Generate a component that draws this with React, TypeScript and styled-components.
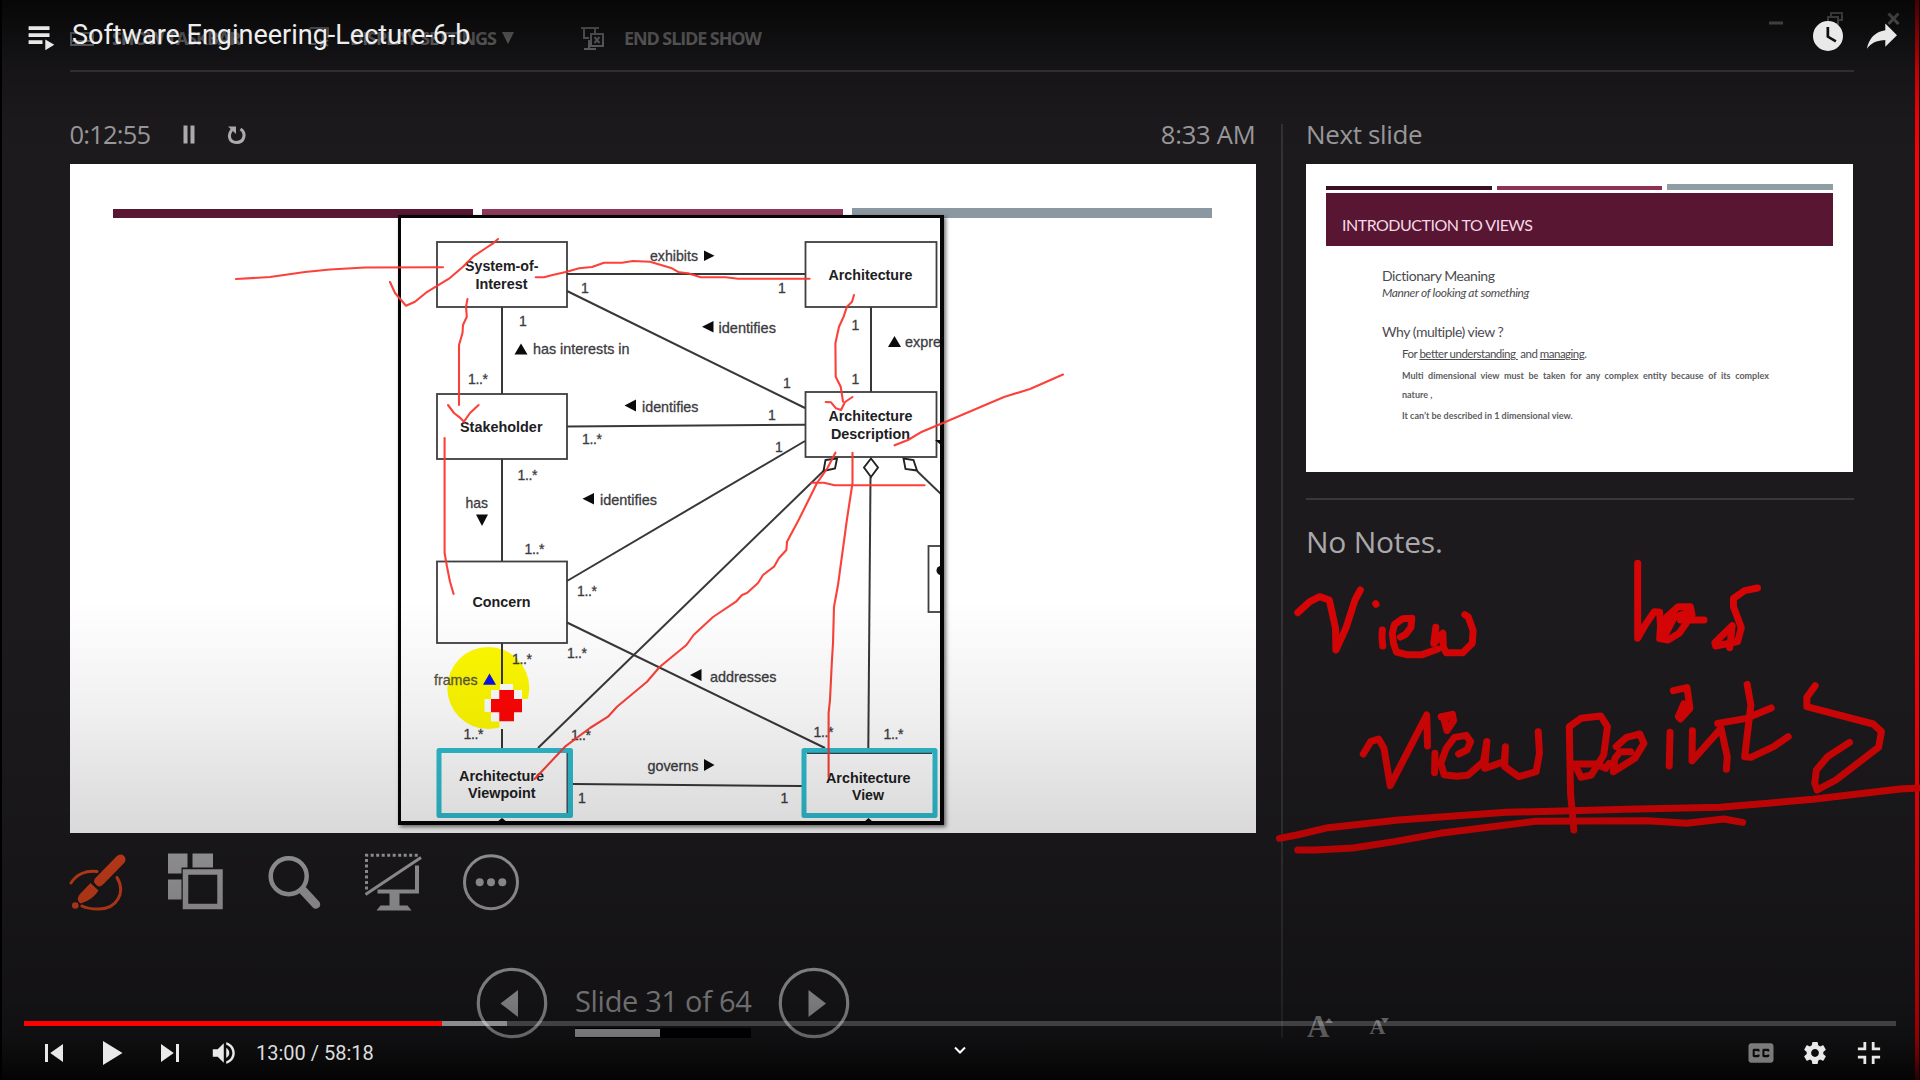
import React from 'react';
import styled, { createGlobalStyle } from 'styled-components';

const GlobalStyle = createGlobalStyle`
  *, *::before, *::after { box-sizing: border-box; }
  html, body { margin: 0; padding: 0; background: #000; }
  body { overflow: hidden; }
`;

const ui = '"Open Sans", "Noto Sans", sans-serif';
const muted = '#9c9b9d';

const Stage = styled.main`
  position: relative;
  display: flex;
  width: 1920px;
  height: 1080px;
  overflow: hidden;
  background: #000;
  padding-left: 2px;
  font-family: ${ui};
`;

const Presenter = styled.section`
  display: flex;
  flex-direction: column;
  width: 1913px;
  height: 1080px;
  padding: 0 61px 0 68px;
  background: #1c1a1d;
`;

const RedEdge = styled.div`
  width: 4px;
  height: 1080px;
  background: #fb0007;
`;

/* ---------- presenter header ---------- */

const Header = styled.header`
  display: flex;
  align-items: center;
  flex: none;
  height: 72px;
  padding-top: 6px;
  border-bottom: 2px solid #3d3c3e;
`;

const HeaderItem = styled.div<{ $width: number; $spacing?: number }>`
  display: flex;
  align-items: center;
  gap: 18px;
  width: ${(p) => p.$width}px;
  color: #8f8e90;
  font-size: 18px;
  font-weight: 700;
  line-height: 24px;
  white-space: nowrap;
  letter-spacing: ${(p) => p.$spacing ?? 0}px;
`;

const Caret = styled.span`
  width: 0;
  height: 0;
  margin-left: -12px;
  border: 6px solid transparent;
  border-top: 12px solid #8f8e90;
  border-bottom: 0;
`;

const WindowControls = styled.div`
  display: flex;
  align-self: flex-start;
  gap: 44px;
  margin: 5px -46px 0 auto;
`;

/* ---------- presenter body ---------- */

const Body = styled.div`
  display: flex;
  flex: 1;
`;

const MainColumn = styled.div`
  display: flex;
  flex-direction: column;
  width: 1186px;
  margin-left: -0.5px;
`;

const TimerRow = styled.div`
  display: flex;
  align-items: center;
  height: 92px;
  padding-top: 32px;
  color: ${muted};
  font-size: 25.5px;
`;

const Elapsed = styled.span`
  width: 112px;
  letter-spacing: -0.8px;
`;

const Clock = styled.span`
  margin-left: auto;
  letter-spacing: -0.2px;
`;

const Slide = styled.div`
  display: flex;
  flex-direction: column;
  height: 668.5px;
  padding: 44px 43px 0;
  background: #fff;
`;

const AccentBars = styled.div<{ $gap: number; $height: number }>`
  display: flex;
  align-items: flex-end;
  gap: ${(p) => p.$gap}px;
  height: ${(p) => p.$height}px;
`;

const AccentBar = styled.div<{ $color: string; $height: number }>`
  flex: 1;
  height: ${(p) => p.$height}px;
  background: ${(p) => p.$color};
`;

const DiagramFrame = styled.div`
  width: 546px;
  height: 610px;
  margin: -3px 0 0 285px;
  border: solid #050505;
  border-width: 3px 4px 4px 3px;
  background: #fff;
  box-shadow: 2px 2px 4px rgba(0, 0, 0, 0.55);
  overflow: hidden;
  svg { display: block; }
`;

const ToolRow = styled.div`
  display: flex;
  align-items: center;
  gap: 38.5px;
  height: 98px;
  margin-left: -0.5px;
  svg { flex: none; }
`;

const NavRow = styled.div`
  display: flex;
  align-items: center;
  height: 72px;
  margin: 36.5px 0 0 406.5px;
`;

const SlideCounter = styled.div`
  display: flex;
  flex-direction: column;
  width: 176px;
  margin: 0 27px;
  padding-top: 10px;
`;

const CounterText = styled.span`
  color: #a3a2a4;
  font-size: 29px;
  line-height: 44px;
  letter-spacing: -0.3px;
  white-space: nowrap;
`;

const CounterTrack = styled.div`
  height: 10px;
  margin-top: 5px;
  padding: 1px 0;
  background: #000;
`;

const CounterFill = styled.div`
  width: 85px;
  height: 8px;
  background: #c9c9c9;
`;

const Divider = styled.div`
  width: 2px;
  height: 914px;
  margin: 52px 23px 0 25.5px;
  background: #333234;
`;

const SideColumn = styled.aside`
  display: flex;
  flex-direction: column;
  width: 548px;
`;

const SideHeading = styled.h2`
  height: 92px;
  margin: 0;
  padding: 32px 0 0;
  color: ${muted};
  font-size: 26px;
  font-weight: 400;
  line-height: 60px;
  letter-spacing: -0.35px;
`;

const Thumb = styled.div`
  width: 547px;
  height: 308px;
  padding: 20px 20px 0;
  background: #fff;
  font-family: Lato, "Open Sans", sans-serif;
`;

const ThumbBand = styled.div`
  height: 53px;
  margin-top: 3px;
  padding: 20px 16px 0;
  background: #581633;
  color: #f4d9e6;
  font-size: 16px;
  line-height: 24px;
  letter-spacing: -0.5px;
`;

const ThumbLine = styled.p<{
  $size: number; $height: number; $indent?: number; $spacing?: number; $word?: number;
  $italic?: boolean; $bold?: boolean;
}>`
  margin: 0 0 0 ${(p) => 56 + (p.$indent ?? 0)}px;
  height: ${(p) => p.$height}px;
  color: ${(p) => (p.$bold ? '#5d5d60' : '#4c4c50')};
  font-size: ${(p) => p.$size}px;
  font-style: ${(p) => (p.$italic ? 'italic' : 'normal')};
  font-weight: ${(p) => (p.$bold ? 700 : 400)};
  line-height: 18px;
  letter-spacing: ${(p) => p.$spacing ?? 0}px;
  word-spacing: ${(p) => p.$word ?? 0}px;
  white-space: pre;
`;

const ThumbBody = styled.div`
  padding-top: 21px;
`;

const NotesRule = styled.div`
  height: 2px;
  margin-top: 26px;
  background: #38373a;
`;

const Notes = styled.p`
  margin: 19px 0 0;
  color: #a9a8aa;
  font-size: 30px;
  line-height: 46px;
  letter-spacing: -0.25px;
`;

const FontSizeRow = styled.div`
  display: flex;
  align-items: flex-end;
  gap: 36px;
  height: 30px;
  margin: auto 0 40px 1px;
  color: #9b9a9c;
`;

const FontButton = styled.div<{ $size: number }>`
  display: flex;
  align-items: flex-start;
  font: bold ${(p) => p.$size}px/22px "Liberation Serif", serif;
  height: 24px;
  svg { margin: 2px 0 0 -4px; }
`;

/* ---------- layers above the recording ---------- */

const InkLayer = styled.svg`
  position: absolute;
  inset: 0;
  fill: none;
  stroke-linecap: round;
  stroke-linejoin: round;
`;

const Shade = styled.div`
  position: absolute;
  inset: 0;
  background:
    linear-gradient(to bottom, rgba(0,0,0,.72) 0, rgba(0,0,0,.46) 38px, rgba(0,0,0,.22) 72px, rgba(0,0,0,.05) 120px, rgba(0,0,0,0) 160px),
    linear-gradient(to top, rgba(0,0,0,.85) 0, rgba(0,0,0,.6) 22px, rgba(0,0,0,.42) 45px, rgba(0,0,0,.32) 80px, rgba(0,0,0,.2) 200px, rgba(0,0,0,.15) 248px, rgba(0,0,0,.06) 370px, rgba(0,0,0,0) 480px);
`;

const Player = styled.div`
  position: absolute;
  inset: 0;
  display: flex;
  flex-direction: column;
  color: #e9e9e9;
  font-family: Roboto, sans-serif;
`;

const TopBar = styled.div`
  display: flex;
  align-items: center;
  height: 54px;
  margin-top: 9px;
  padding: 0 11px 0 28px;
`;

const Title = styled.h1`
  margin: 0 auto 3px 17px;
  font-size: 27px;
  font-weight: 400;
  line-height: 36px;
  color: #eee;
`;

const ProgressTrack = styled.div`
  display: flex;
  height: 5px;
  margin: auto 24px 0;
  background: rgba(255, 255, 255, 0.2);
`;

const ProgressPlayed = styled.div`
  width: 418px;
  background: #f00;
`;

const ProgressLoaded = styled.div`
  width: 64.5px;
  background: rgba(255, 255, 255, 0.4);
`;

const ControlBar = styled.div`
  display: grid;
  grid-template-columns: 1fr auto 1fr;
  height: 54px;
  padding: 0 24px 0 26px;
`;

const Group = styled.div<{ $end?: boolean }>`
  display: flex;
  align-items: center;
  justify-content: ${(p) => (p.$end ? 'flex-end' : 'flex-start')};
  gap: ${(p) => (p.$end ? 0 : 4)}px;
`;

const IconButton = styled.button<{ $size?: number; $width?: number }>`
  display: flex;
  align-items: center;
  justify-content: center;
  width: ${(p) => p.$width ?? 54}px;
  height: 54px;
  padding: 0;
  border: 0;
  background: none;
  color: inherit;
  svg {
    width: ${(p) => p.$size ?? 54}px;
    height: ${(p) => p.$size ?? 54}px;
    flex: none;
    fill: currentColor;
  }
`;

const Time = styled.span`
  margin-left: 4px;
  font-size: 20px;
  line-height: 28px;
  color: #ddd;
  white-space: nowrap;
`;

const ChevronSlot = styled.div`
  padding: 15px 2px 0 0;
`;

/* ---------- diagram ---------- */

type Label = [x: number, y: number, width: number, text: string];

const nodes = [
  [437, 242, 130, 65], [805.5, 242, 131, 65], [437, 394, 130, 65],
  [805.5, 392, 131, 65], [437, 561.5, 130, 81.5], [928.5, 546, 60, 66],
];
const nodeLabels: Label[] = [
  [465, 271, 73.5, 'System-of-'], [475.5, 288.7, 52, 'Interest'],
  [828.5, 280.3, 84, 'Architecture'], [460, 432, 82.5, 'Stakeholder'],
  [828.5, 421.2, 84, 'Architecture'], [831, 439, 79, 'Description'],
  [472.5, 607.2, 58, 'Concern'],
  [459, 780.5, 85, 'Architecture'], [468, 798, 67.5, 'Viewpoint'],
  [826, 782.6, 84.5, 'Architecture'], [852, 799.6, 32, 'View'],
];
const relationLabels: Label[] = [
  [650, 261.2, 48, 'exhibits'], [718.5, 332.7, 57.5, 'identifies'],
  [533, 354, 96.5, 'has interests in'], [642, 412, 56.5, 'identifies'],
  [600, 505.2, 57, 'identifies'], [465.5, 508, 22.5, 'has'],
  [710, 682.3, 66.5, 'addresses'], [647.5, 771, 51, 'governs'],
  [905, 347.3, 36, 'expre'],
];
const ones: [number, number][] = [
  [585, 293.3], [782, 293.3], [523, 325.7], [855.5, 329.8], [787, 387.7],
  [855.5, 384], [772, 419.7], [779, 452.3], [582, 803], [784.5, 803],
];
const many: [number, number][] = [
  [468, 384], [582, 444.3], [517.5, 479.6], [524.5, 554.2], [577, 596],
  [567, 658], [512, 664], [463.5, 739], [571, 739.8], [813.5, 737], [883.5, 739.2],
];
const links = [
  'M567 274H805', 'M502 307V394', 'M567 291L805 408', 'M871 307V392',
  'M567 426.5L805 424.8', 'M502 459V561', 'M805 441L567 581',
  'M823.5 471L538 748', 'M870.5 477L868.3 748', 'M917 471L942 495',
  'M502 643V684', 'M502 729V748', 'M567 622.5L825 748', 'M573 784L802 786',
];
const arrows = [
  'M704 250.5V261L714.5 255.7z', 'M713.5 321V332.5L702 326.7z',
  'M514.5 354.5H527.5L521 343.5z', 'M888 347H901L894.5 336z',
  'M636 399.5V411.5L624.5 405.5z', 'M594 493V504.5L582.5 498.7z',
  'M476 514.5H488L482 526z', 'M701.5 669V681L690 675z',
  'M704 759V771L714.5 765z', 'M497 822L502 818L507 822z', 'M864 822L868.5 818L873 822z',
  'M935 440H942V446z',
];

const Diagram = () => (
  <svg width="540" height="604" viewBox="401 218 540 604">
    <circle cx="488.3" cy="688" r="41" fill="#fffa00" />
    <g fill="#fff" stroke="#3f3f41" strokeWidth="1.8">
      {nodes.map(([x, y, w, h]) => <rect key={`${x}-${y}`} x={x} y={y} width={w} height={h} />)}
    </g>
    <g fill="none" stroke="#38383a" strokeWidth="2">
      {links.map((d) => <path key={d} d={d} />)}
    </g>
    <g fill="#fff" stroke="#222" strokeWidth="1.9">
      <path d="M825.5 460L837 458.5L835 468.5L823.5 471z" />
      <path d="M871 458.5L878 467.5L871 477L864 467.5z" />
      <path d="M903.5 458.5L913.5 460L917 470.5L905.5 469z" />
    </g>
    <g fill="#fff" stroke="#2fbdd0" strokeWidth="5" strokeLinejoin="round">
      <rect x="439" y="750.5" width="131.5" height="65" />
      <rect x="804" y="750.5" width="131" height="65" />
    </g>
    <path d="M567.2 753V813M807 753.4H932" stroke="#35454b" strokeWidth="1.4" fill="none" />
    <g fill="#0b0b0b">{arrows.map((d) => <path key={d} d={d} />)}</g>
    <circle cx="941" cy="570.5" r="4.5" fill="#111" />
    <path d="M483 684.7H496L489.5 673.5z" fill="#0a12e8" />
    <g fontFamily='"Liberation Sans", sans-serif' fontSize="14.6">
      <g fontWeight="700" fill="#202022">
        {nodeLabels.map(([x, y, w, t]) => (
          <text key={`${x}-${y}`} x={x} y={y} textLength={w} lengthAdjust="spacingAndGlyphs">{t}</text>
        ))}
      </g>
      <g fill="#3c3c3f" stroke="#3c3c3f" strokeWidth="0.3">
        {relationLabels.map(([x, y, w, t]) => (
          <text key={`${x}-${y}`} x={x} y={y} textLength={w} lengthAdjust="spacingAndGlyphs">{t}</text>
        ))}
        {ones.map(([x, y]) => <text key={`${x}-${y}`} x={x} y={y} textAnchor="middle" fontSize="14">1</text>)}
        {many.map(([x, y]) => (
          <text key={`${x}-${y}`} x={x} y={y} textLength="20" fontSize="14">1..*</text>
        ))}
      </g>
      <text x="434" y="685.3" textLength="43.5" lengthAdjust="spacingAndGlyphs" fill="#59563f" stroke="#59563f" strokeWidth="0.3">frames</text>
    </g>
    <path d="M500 684H513V690H522V699H528V712H522V721.500H514V728.500H499.500V721.500H491V712H484.500V699H491V690H500z" fill="#fff" />
    <path d="M499.300 690H514V699H522V712.300H514V721.300H499.300V712.300H491V699H499.300z" fill="#ff0505" />
  </svg>
);

/* ---------- ink ---------- */

const slideInk = [
  '236,279 270,277 305,272 330,269.500 365,267.500 443,267.300',
  '390,282 395,293 406,305.700 415,301.700 426,292.700 449,278.700 463,266.700 473,256.700 486,248 493.600,243 498,239',
  '535.700,277.300 544,277.300 552.500,275 567,271.700 579,268.300 592,267 604,262.700 622,262.700 633,261 650,261.700 661,265 672,268.300 679,272.300 688,273.300 700.700,277.300 725.700,277.300 738,278.700 809.600,278.700',
  '467.500,299 466,306.700 466.800,316.700 463,325 462.500,333 459,345 459,405',
  '448,405 454,413 459.600,417.300 464,421.700 470,413 478.600,405',
  '854,295 852,301.700 847,306.700 843.600,316.700 839,326.700 835.400,343.300 835.700,376.700 840.700,386.700 843,401.700',
  '825.700,402 831,402.300 836,408.300 841,410 845,402 852.500,397',
  '894.600,445.300 908,440 922,431.700 950,420 1004,397 1030,389 1063,374.500',
  '444.600,438 444.600,553 447,566.700 450,581.700 453.600,594',
  '811,482.700 824,482.700 834.600,485.300 924.600,485.300',
  '835.400,452.700 827.500,468 817,483 799,519.300 795,526.700 787,541.700 786.400,550 779,558 774,566.700 763,575 758,583 747,593 742,595 736,601.700 713,617 693.600,635 686.400,645 659.600,667 647,681.700 617,706.700 608,716.700 590,728 565,746.700 534.600,779',
  '852.500,452.700 852.500,483 847,519 838,585 834,606.700 833,643 831.800,663 830,700 828.600,713 828.600,776.700',
];

/* Handwriting recorded on the pen tablet, mapped onto the stage by the group transform. */
const handwriting = [
  '67,338 96,305 120,290 143,300 152,350 158,385 159,450 183,385 205,300 218,270',
  '255,311 256,313',
  '271,390 270,412 272,438',
  '315,411 327,403 340,382 342,355 320,356 300,374 295,400 298,430 305,456 330,464 367,464 405,447',
  '400,382 395,430 417,400 418,440 425,458 465,458 488,430 490,392 478,350 470,344',
  '887,190 887,415 905,375 927,335 940,337 942,380 940,416 960,420 987,400 1018,345 1014,320 985,320 958,350 944,410',
  '955,400 975,352 1008,338',
  '990,360 1047,360',
  '1176,264 1145,272 1118,295 1118,320 1137,383 1128,425 1075,438 1073,428 1115,377 1109,443',
  '225,762 243,725 262,717 275,745 290,857 378,645 380,738',
  '413,650 440,643 443,662 427,692 420,660 430,650',
  '398,760 397,818',
  '455,762 475,750 484,725 473,706 445,712 425,745 412,790 420,824 450,829 477,826 515,785 523,725',
  '523,725 518,805 565,785 568,740 566,800 600,830 642,815 650,760 647,695',
  '733,990 725,880 722,680 750,655 798,648 814,680 805,765 775,825 750,832 735,792 785,792 810,805 818,790',
  '835,740 860,712 892,702 902,730 880,775 828,815 832,775 845,755 870,755',
  '965,697 963,798',
  '973,572 1006,563 1013,625 990,657 985,650 998,612',
  '1019,692 1018,783 1088,685 1103,770 1101,808',
  '1151,553 1160,615 1145,770 1160,772 1215,740 1250,710',
  '1080,670 1150,655 1209,624',
  '1315,557 1295,592 1295,620 1455,672 1475,695 1468,742 1365,840 1320,870 1314,850 1318,810 1345,770 1398,727',
  '23,1015 65,1005 140,983 310,960 570,937 860,928 1085,922 1310,898 1520,867 1568,864',
  '67,1050 110,1050 200,1044 300,1025 410,1000 640,964 910,962 1005,970 1095,957 1140,967',
];

const Ink = () => (
  <InkLayer width="1920" height="1080" viewBox="0 0 1920 1080">
    <g stroke="#fb3830" strokeWidth="2.100" opacity="0.95">
      {slideInk.map((p) => <polyline key={p} points={p} />)}
    </g>
    <g stroke="#d60506" strokeWidth="7" transform="matrix(0.41454 0 0 0.33333 1270 500)">
      {handwriting.map((p) => <polyline key={p} points={p} vectorEffect="non-scaling-stroke" />)}
    </g>
  </InkLayer>
);

/* ---------- presenter tools ---------- */

const grey = '#a8a7a9';

const Tools = () => (
  <ToolRow>
    <svg width="60" height="60" viewBox="69 851.500 60 60" fill="none" strokeLinecap="round">
      <path d="M71 882.500C76 874 86 869.500 97 871M117 877C126 892 117 909 98 908.500C91 908.500 86 907.500 82 905.500" stroke="#d8421c" strokeWidth="3" />
      <path d="M120.500 859L99 881" stroke="#d8421c" strokeWidth="10" />
      <path d="M90.500 882.500L98.500 890C95 896 88 901 80.500 903C76 900 78 896 80 893.500z" fill="#d8421c" />
      <path d="M91 880L100.500 889.500" stroke="#1c1a1d" strokeWidth="1.300" />
      <circle cx="75.300" cy="905" r="3.300" fill="#d8421c" />
    </svg>
    <svg width="60" height="60" viewBox="168.500 851.500 60 60" fill={grey}>
      <path d="M168.500 853H188V867H182V873H168.500zM193 853H213.500V867H193zM168.500 879H182V899H168.500z" />
      <rect x="186" y="871.500" width="34.500" height="34.500" fill="none" stroke={grey} strokeWidth="5.500" />
    </svg>
    <svg width="60" height="60" viewBox="266 851.500 60 60" fill="none" stroke={grey} strokeLinecap="round">
      <circle cx="288.700" cy="875.700" r="18" strokeWidth="4.500" />
      <path d="M303 890L316 904" strokeWidth="8.500" />
    </svg>
    <svg width="60" height="60" viewBox="364.500 851.500 60 60" fill="none" stroke={grey}>
      <path d="M366 889V854.700H418" strokeWidth="3" strokeDasharray="3 2.500" />
      <path d="M365 894L420.500 857" strokeWidth="3" />
      <path d="M416.500 865V891H377" strokeWidth="4" />
      <path d="M389 892H399V905H407L411 910H376L380 905H389z" fill={grey} stroke="none" />
    </svg>
    <svg width="60" height="60" viewBox="463 851.500 60 60" fill={grey}>
      <circle cx="491" cy="881.700" r="26.500" fill="none" stroke={grey} strokeWidth="3" />
      <circle cx="479.700" cy="881.700" r="4" /><circle cx="491" cy="881.700" r="4" /><circle cx="502.300" cy="881.700" r="4" />
    </svg>
  </ToolRow>
);

const NavButton = ({ forward }: { forward?: boolean }) => (
  <svg width="72" height="72" viewBox="0 0 72 72">
    <circle cx="36" cy="36" r="33.700" fill="none" stroke="#b0afb1" strokeWidth="3.200" />
    <path d={forward ? 'M30.500 23V50L48 36.500z' : 'M42 23V50L24.500 36.500z'} fill="#b4b4b4" />
  </svg>
);

const ThumbText = () => (
  <ThumbBody>
    <ThumbLine $size={14} $height={17} $spacing={-0.45}>Dictionary Meaning</ThumbLine>
    <ThumbLine $size={12} $height={39} $spacing={-0.35} $italic>Manner of looking at something</ThumbLine>
    <ThumbLine $size={14} $height={22} $spacing={-0.45}>Why (multiple) view ?</ThumbLine>
    <ThumbLine $size={11.5} $height={22} $indent={20} $spacing={-0.5}>For <u>better understanding </u> and <u>managing</u>.</ThumbLine>
    <ThumbLine $size={9} $height={18.5} $indent={20} $word={2.4} $bold>Multi dimensional view must be taken for any complex entity because of its complex</ThumbLine>
    <ThumbLine $size={9} $height={21} $indent={20} $bold>nature ,</ThumbLine>
    <ThumbLine $size={9} $height={18} $indent={20} $bold>It can’t be described in 1 dimensional view.</ThumbLine>
  </ThumbBody>
);

const Thumbnail = () => (
  <Thumb>
    <AccentBars $gap={5} $height={6}>
      <AccentBar $color="#3c0f24" $height={4} />
      <AccentBar $color="#8d3054" $height={4} />
      <AccentBar $color="#8f9da5" $height={6} />
    </AccentBars>
    <ThumbBand>INTRODUCTION TO VIEWS</ThumbBand>
    <ThumbText />
  </Thumb>
);

const CC = 'M11,11 C9.900,11 9,11.900 9,13 L9,23 C9,24.100 9.900,25 11,25 L25,25 C26.100,25 27,24.100 27,23 L27,13 C27,11.900 26.100,11 25,11 L11,11 Z M17,17 L15.500,17 L15.500,16.500 L13.500,16.500 L13.500,19.500 L15.500,19.500 L15.500,19 L17,19 L17,20 C17,20.550 16.550,21 16,21 L13,21 C12.450,21 12,20.550 12,20 L12,16 C12,15.450 12.450,15 13,15 L16,15 C16.550,15 17,15.450 17,16 L17,17 Z M24,17 L22.500,17 L22.500,16.500 L20.500,16.500 L20.500,19.500 L22.500,19.500 L22.500,19 L24,19 L24,20 C24,20.550 23.550,21 23,21 L20,21 C19.450,21 19,20.550 19,20 L19,16 C19,15.450 19.450,15 20,15 L23,15 C23.550,15 24,15.450 24,16 L24,17 Z';
const GEAR = 'm 23.94,18.78 c .03,-0.25 .05,-0.51 .05,-0.78 0,-0.27 -0.02,-0.52 -0.05,-0.78 l 1.68,-1.32 c .15,-0.12 .19,-0.33 .09,-0.51 l -1.6,-2.76 c -0.09,-0.17 -0.31,-0.24 -0.48,-0.17 l -1.99,.8 c -0.41,-0.32 -0.86,-0.58 -1.35,-0.78 l -0.30,-2.12 c -0.02,-0.19 -0.19,-0.33 -0.39,-0.33 l -3.2,0 c -0.2,0 -0.36,.14 -0.39,.33 l -0.30,2.12 c -0.48,.2 -0.93,.47 -1.35,.78 l -1.99,-0.8 c -0.18,-0.07 -0.39,0 -0.48,.17 l -1.6,2.76 c -0.10,.17 -0.05,.39 .09,.51 l 1.68,1.32 c -0.03,.25 -0.05,.52 -0.05,.78 0,.26 .02,.52 .05,.78 l -1.68,1.32 c -0.15,.12 -0.19,.33 -0.09,.51 l 1.6,2.76 c .09,.17 .31,.24 .48,.17 l 1.99,-0.8 c .41,.32 .86,.58 1.35,.78 l .30,2.12 c .02,.19 .19,.33 .39,.33 l 3.2,0 c .2,0 .36,-0.14 .39,-0.33 l .30,-2.12 c .48,-0.2 .93,-0.47 1.35,-0.78 l 1.99,.8 c .18,.07 .39,0 .48,-0.17 l 1.6,-2.76 c .09,-0.17 .05,-0.39 -0.09,-0.51 l -1.68,-1.32 0,0 z m -5.94,2.01 c -1.54,0 -2.8,-1.25 -2.8,-2.8 0,-1.54 1.25,-2.8 2.8,-2.8 1.54,0 2.8,1.25 2.8,2.8 0,1.54 -1.25,2.8 -2.8,2.8 l 0,0 z';

const Icon36 = ({ d, opacity, rule }: { d: string; opacity?: number; rule?: 'evenodd' }) => (
  <svg viewBox="0 0 36 36" opacity={opacity}><path d={d} fillRule={rule} /></svg>
);

const PlayerControls = () => (
  <Player>
    <TopBar>
      <svg width="27" height="27" viewBox="28 24 27 27" fill="#e9e9e9">
        <path d="M28.600 27.300H49.500V31H28.600zM28.600 34.200H49.500V37.900H28.600zM28.600 41.200H42.500V44.900H28.600zM45.300 40.500L54.300 45.800L45.300 51.200z" />
      </svg>
      <Title>Software Engineering-Lecture-6-b</Title>
      <IconButton><Icon36 rule="evenodd" d="M18,8 A10,10 0 1 0 18,28 A10,10 0 1 0 18,8 Z M17,12 L18.800,12 L18.800,18 L23.700,20.900 L22.800,22.400 L17,18.900 Z" /></IconButton>
      <IconButton><Icon36 d="m 20.20,14.19 0,-4.45 7.79,7.79 -7.79,7.62 0,-4.56 C 16.27,20.69 12.10,21.81 9.34,24.76 8.80,25.13 7.60,27.29 8.12,25.65 9.08,21.32 11.80,17.18 15.98,15.38 c 1.33,-0.60 2.76,-0.98 4.21,-1.19 z" /></IconButton>
    </TopBar>
    <ProgressTrack><ProgressPlayed /><ProgressLoaded /></ProgressTrack>
    <ControlBar>
      <Group>
        <IconButton $width={55}><Icon36 d="m 12,12 h 2 v 12 h -2 z m 3.500,6 8.500,6 V 12 z" /></IconButton>
        <IconButton><Icon36 d="M 12,26 25,18 12,10 z" /></IconButton>
        <IconButton><Icon36 d="M 12,24 20.500,18 12,12 V 24 z M 22,12 v 12 h 2 V 12 h -2 z" /></IconButton>
        <IconButton $width={47} $size={44}><Icon36 d="M8,21 L12,21 L17,26 L17,10 L12,15 L8,15 L8,21 Z M19,14 L19,22 C20.480,21.320 21.500,19.770 21.500,18 C21.500,16.260 20.480,14.740 19,14 Z M19,11.290 C21.890,12.150 24,14.830 24,18 C24,21.170 21.890,23.850 19,24.710 L19,26.770 C23.010,25.860 26,22.280 26,18 C26,13.740 23.010,10.140 19,9.230 L19,11.290 Z" /></IconButton>
        <Time>13:00 / 58:18</Time>
      </Group>
      <ChevronSlot>
        <svg width="14" height="10" viewBox="0 0 14 10" fill="none" stroke="#fff" strokeWidth="2">
          <path d="M2 1.500L7 6.500L12 1.500" />
        </svg>
      </ChevronSlot>
      <Group $end>
        <IconButton $size={50}><Icon36 d={CC} opacity={0.5} rule="evenodd" /></IconButton>
        <IconButton $size={50}><Icon36 d={GEAR} /></IconButton>
        <IconButton $size={50}><Icon36 d="m 14,14 -4,0 0,2 6,0 0,-6 -2,0 0,4 z M 22,14 v -4 h -2 v 6 h 6 v -2 z M 20,26 h 2 v -4 h 4 v -2 h -6 z M 10,22 h 4 v 4 h 2 v -6 h -6 z" /></IconButton>
      </Group>
    </ControlBar>
  </Player>
);

export default function App() {
  return (
    <>
      <GlobalStyle />
      <Stage>
        <Presenter>
          <Header>
            <HeaderItem $width={238} $spacing={-1.1}>
              <svg width="24" height="20" viewBox="0 0 24 20" fill="none" stroke="#8f8e90" strokeWidth="2">
                <path d="M1 5H23V17H1zM1 13H23M5 15.500H8M11 15.500H14" />
              </svg>
              SHOW TASKBAR
            </HeaderItem>
            <HeaderItem $width={273} $spacing={-1.1}>
              <svg width="24" height="24" viewBox="0 0 24 24" fill="none" stroke="#8f8e90" strokeWidth="2">
                <path d="M2 2H20V12M8 18H2V2M12 14L20 20M12 20L20 14" />
              </svg>
              DISPLAY SETTINGS
              <Caret />
            </HeaderItem>
            <HeaderItem $width={200} $spacing={-1.1}>
              <svg width="25" height="25" viewBox="0 0 25 25" fill="none" stroke="#8f8e90" strokeWidth="2">
                <path d="M0 2H18M3 2V12H8M14 7V2" />
                <path d="M10 8H22V20H10z" />
                <path d="M13.500 11L18.500 17M18.500 11L13.500 17M8 14V22M3 23H15" />
              </svg>
              END SLIDE SHOW
            </HeaderItem>
            <WindowControls>
              <svg width="14" height="14" viewBox="0 0 14 14"><path d="M0 12H14" stroke="#8f8f8f" strokeWidth="3" /></svg>
              <svg width="16" height="14" viewBox="0 0 16 14" fill="none" stroke="#8f8f8f" strokeWidth="2"><path d="M4 5V2H15V9H12M1 6H11V13H1z" /></svg>
              <svg width="13" height="14" viewBox="0 0 13 14" fill="none" stroke="#9a9a9a" strokeWidth="3"><path d="M1.500 2.500L11.500 13M11.500 2.500L1.500 13" /></svg>
            </WindowControls>
          </Header>
          <Body>
            <MainColumn>
              <TimerRow>
                <Elapsed>0:12:55</Elapsed>
                <svg width="66" height="24" viewBox="182 122 66 24" fill="none" stroke="#b0afb1">
                  <path d="M185.500 125.500V143.500M192.500 125.500V143.500" strokeWidth="4" />
                  <path d="M233 128.500C227 135 229 142.500 236.500 142.500C244.500 142.500 246.500 133 240.500 129" strokeWidth="3" />
                  <path d="M228 126.500H236V134z" fill="#b0afb1" stroke="none" />
                </svg>
                <Clock>8:33 AM</Clock>
              </TimerRow>
              <Slide>
                <AccentBars $gap={9.5} $height={10}>
                  <AccentBar $color="#581733" $height={9} />
                  <AccentBar $color="#8e3a5b" $height={9} />
                  <AccentBar $color="#8c98a1" $height={10} />
                </AccentBars>
                <DiagramFrame><Diagram /></DiagramFrame>
              </Slide>
              <Tools />
              <NavRow>
                <NavButton />
                <SlideCounter>
                  <CounterText>Slide 31 of 64</CounterText>
                  <CounterTrack><CounterFill /></CounterTrack>
                </SlideCounter>
                <NavButton forward />
              </NavRow>
            </MainColumn>
            <Divider />
            <SideColumn>
              <SideHeading>Next slide</SideHeading>
              <Thumbnail />
              <NotesRule />
              <Notes>No Notes.</Notes>
              <FontSizeRow>
                <FontButton $size={31}>A<svg width="8" height="5"><path d="M0 5L4 0L8 5z" fill="#9b9a9c" /></svg></FontButton>
                <FontButton $size={22}>A<svg width="8" height="5"><path d="M0 0L4 5L8 0z" fill="#9b9a9c" /></svg></FontButton>
              </FontSizeRow>
            </SideColumn>
          </Body>
        </Presenter>
        <RedEdge />
        <Ink />
        <Shade />
        <PlayerControls />
      </Stage>
    </>
  );
}
